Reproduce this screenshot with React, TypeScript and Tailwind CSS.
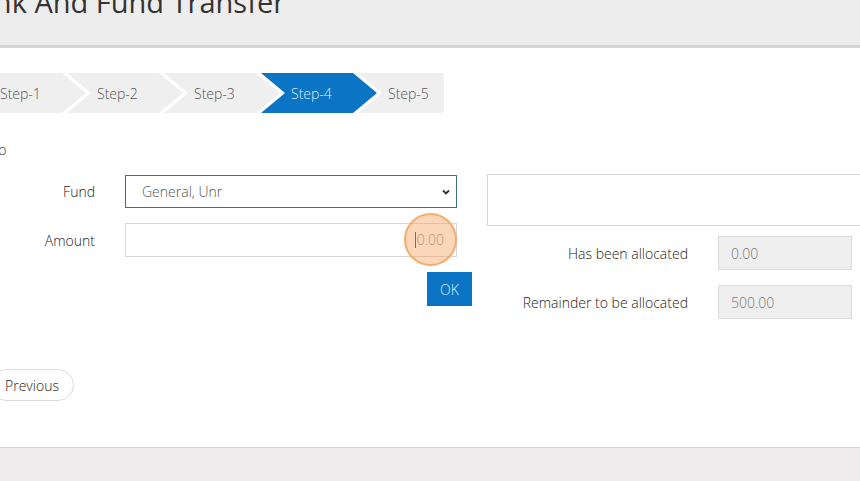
const steps = [
  { label: 'Step-1', active: false },
  { label: 'Step-2', active: false },
  { label: 'Step-3', active: false },
  { label: 'Step-4', active: true },
  { label: 'Step-5', active: false },
];

const font = { fontFamily: '"Open Sans", "Noto Sans", sans-serif' };

function StepBar() {
  return (
    <div className="flex h-[40px] ml-[-30px]">
      {steps.map((s, i) => {
        const last = i === steps.length - 1;
        return (
          <div
            key={s.label}
            className={
              (s.active ? 'bg-[#0b74c4] text-[#dcf0ff] ' : 'bg-[#efefef] text-[#555] ') +
              (i > 0 ? 'ml-[-19px] ' : '') +
              (last
                ? 'w-[86px] rounded-r-[3px] [clip-path:polygon(0_0,100%_0,100%_100%,0_100%,24px_50%)]'
                : 'w-[116px] [clip-path:polygon(0_0,calc(100%-24px)_0,100%_50%,calc(100%-24px)_100%,0_100%,24px_50%)]') +
              ' flex items-center pl-[30px] text-[14px] font-light'
            }
          >
            {s.label}
          </div>
        );
      })}
    </div>
  );
}

export default function App() {
  return (
    <div className="w-[860px] h-[481px] overflow-hidden bg-white flex flex-col" style={font}>
      <div className="h-[48px] shrink-0 bg-[#eeedee] border-b-[3px] border-[#d4d4da] overflow-hidden">
        <h1 className="text-[29px] leading-none text-[#333] mt-[-13px] ml-[-41px] whitespace-nowrap">
          Bank And Fund Transfer
        </h1>
      </div>

      <div className="flex-1 pt-[25px]">
        <StepBar />

        <div className="mt-[30px] ml-[-9px] text-[14px] leading-[14px] text-[#333] h-[14px] font-light">To</div>

        <div className="flex mt-[18px] font-light">
          <div className="w-[472px] shrink-0 flex flex-col">
            <div className="flex items-center">
              <label className="w-[95px] text-right text-[14px] text-[#222]">Fund</label>
              <div className="ml-[30px] w-[332px] h-[33px] border border-[#3f6f7e] flex items-center justify-between pl-[16px] pr-[5px] text-[14px] text-[#555]">
                <span>General, Unr</span>
                <svg width="10" height="10" viewBox="0 0 10 10">
                  <path d="M2 3.5 L5 6.5 L8 3.5" fill="none" stroke="#333" strokeWidth="1.8" />
                </svg>
              </div>
            </div>
            <div className="flex items-center mt-[15px]">
              <label className="w-[95px] text-right text-[14px] text-[#222]">Amount</label>
              <div className="relative ml-[30px] w-[332px] h-[34px] border border-[#d6d6d6] flex items-center justify-end pr-[12px] text-[14px] text-[#888]">
                <span className="border-l border-[#333] pl-[1px] leading-[16px]">0.00</span>
                <div className="absolute left-[278px] top-[-11px] w-[53px] h-[53px] rounded-full bg-[#f7a462]/45 border-2 border-[#f4a15e]/80" />
              </div>
            </div>
            <div className="flex justify-end mt-[15px]">
              <button className="w-[45px] h-[34px] bg-[#0b74c4] text-[#dcf0ff] text-[14px]">OK</button>
            </div>
          </div>

          <div className="ml-[15px] flex-1 flex flex-col mt-[-1px]">
            <div className="w-[400px] h-[52px] border border-[#d6d6d6]" />
            <div className="flex items-center mt-[10px]">
              <label className="w-[201px] text-right text-[14px] text-[#222]">Has been allocated</label>
              <div className="ml-[30px] w-[134px] h-[34px] bg-[#eeeeee] border border-[#dcdcdc] flex items-center pl-[12px] text-[14px] text-[#777]">
                0.00
              </div>
            </div>
            <div className="flex items-center mt-[15px]">
              <label className="w-[201px] text-right text-[14px] text-[#222]">Remainder to be allocated</label>
              <div className="ml-[30px] w-[134px] h-[34px] bg-[#eeeeee] border border-[#dcdcdc] flex items-center pl-[12px] text-[14px] text-[#777]">
                500.00
              </div>
            </div>
          </div>
        </div>

        <div className="mt-[50px] ml-[-10px] font-light">
          <button className="h-[32px] px-[14px] rounded-full border border-[#dcdcdc] text-[14px] text-[#222]">
            Previous
          </button>
        </div>
      </div>

      <div className="h-[34px] shrink-0 bg-[#eeeced] border-t border-[#d8d8d8]" />
    </div>
  );
}
